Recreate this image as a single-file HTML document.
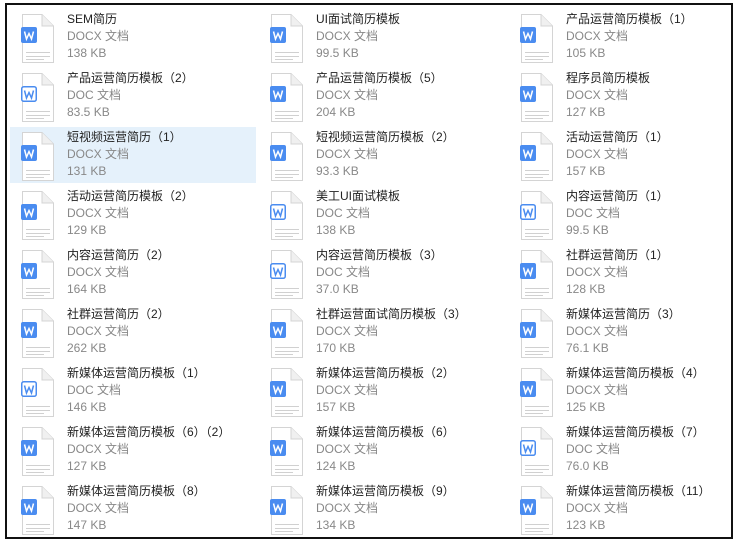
<!DOCTYPE html>
<html><head><meta charset="utf-8"><style>
body{margin:0;width:740px;height:544px;background:#fff;position:relative;overflow:hidden;font-family:"Liberation Sans","Noto Sans CJK SC",sans-serif;}
.frame{position:absolute;left:5px;top:3px;width:724px;height:532px;border:2.5px solid #111;}
.it{position:absolute;width:246px;height:56px;}
.it.sel{background:#e5f1fb;}
.it svg{position:absolute;left:0px;top:3px;}
.t{position:absolute;left:57px;font-size:12px;line-height:14px;white-space:nowrap;}
.t1{top:2px;color:#222;}
.t2{top:19px;color:#888;}
.t3{top:36px;color:#888;}
.c0{left:10px}.c1{left:259px}.c2{left:509px}
</style></head><body>
<div class="frame"></div>
<svg width="0" height="0" style="position:absolute"><defs>
<g id="pg"><path d="M12.5 1.5 H32 L43.5 13 V49.5 H12.5 Z" fill="#fff" stroke="#d4d4d4"/><path d="M32 1.5 V13 H43.5" fill="#f0f0f0" stroke="#d4d4d4"/><path d="M16 39.5H40M16 43.5H40M16 46.5H34" stroke="#d0d0d0"/></g>
<g id="x"><use href="#pg"/><rect x="11" y="14" width="16" height="16" rx="2" fill="#4a8cf0"/><path d="M14.5 18.5 L16.5 26 L19 20.5 L21.5 26 L23.5 18.5" fill="none" stroke="#fff" stroke-width="1.5"/></g>
<g id="d"><use href="#pg"/><rect x="11.75" y="14.75" width="14.5" height="14.5" rx="2" fill="#fff" stroke="#4a8cf0" stroke-width="1.5"/><path d="M14.5 18.5 L16.5 26 L19 20.5 L21.5 26 L23.5 18.5" fill="none" stroke="#4a8cf0" stroke-width="1.5"/></g>
</defs></svg>

<div class="it c0" style="top:10px"><svg width="46" height="52"><use href="#x"/></svg><div class="t t1">SEM简历</div><div class="t t2">DOCX 文档</div><div class="t t3">138 KB</div></div>
<div class="it c1" style="top:10px"><svg width="46" height="52"><use href="#x"/></svg><div class="t t1">UI面试简历模板</div><div class="t t2">DOCX 文档</div><div class="t t3">99.5 KB</div></div>
<div class="it c2" style="top:10px"><svg width="46" height="52"><use href="#x"/></svg><div class="t t1">产品运营简历模板（1）</div><div class="t t2">DOCX 文档</div><div class="t t3">105 KB</div></div>

<div class="it c0" style="top:69px"><svg width="46" height="52"><use href="#d"/></svg><div class="t t1">产品运营简历模板（2）</div><div class="t t2">DOC 文档</div><div class="t t3">83.5 KB</div></div>
<div class="it c1" style="top:69px"><svg width="46" height="52"><use href="#x"/></svg><div class="t t1">产品运营简历模板（5）</div><div class="t t2">DOCX 文档</div><div class="t t3">204 KB</div></div>
<div class="it c2" style="top:69px"><svg width="46" height="52"><use href="#x"/></svg><div class="t t1">程序员简历模板</div><div class="t t2">DOCX 文档</div><div class="t t3">127 KB</div></div>

<div class="it c0 sel" style="top:127px"><svg width="46" height="52" style="top:4px"><use href="#x"/></svg><div class="t t1" style="top:3px">短视频运营简历（1）</div><div class="t t2" style="top:20px">DOCX 文档</div><div class="t t3" style="top:37px">131 KB</div></div>
<div class="it c1" style="top:128px"><svg width="46" height="52"><use href="#x"/></svg><div class="t t1">短视频运营简历模板（2）</div><div class="t t2">DOCX 文档</div><div class="t t3">93.3 KB</div></div>
<div class="it c2" style="top:128px"><svg width="46" height="52"><use href="#x"/></svg><div class="t t1">活动运营简历（1）</div><div class="t t2">DOCX 文档</div><div class="t t3">157 KB</div></div>

<div class="it c0" style="top:187px"><svg width="46" height="52"><use href="#x"/></svg><div class="t t1">活动运营简历模板（2）</div><div class="t t2">DOCX 文档</div><div class="t t3">129 KB</div></div>
<div class="it c1" style="top:187px"><svg width="46" height="52"><use href="#d"/></svg><div class="t t1">美工UI面试模板</div><div class="t t2">DOC 文档</div><div class="t t3">138 KB</div></div>
<div class="it c2" style="top:187px"><svg width="46" height="52"><use href="#d"/></svg><div class="t t1">内容运营简历（1）</div><div class="t t2">DOC 文档</div><div class="t t3">99.5 KB</div></div>

<div class="it c0" style="top:246px"><svg width="46" height="52"><use href="#x"/></svg><div class="t t1">内容运营简历（2）</div><div class="t t2">DOCX 文档</div><div class="t t3">164 KB</div></div>
<div class="it c1" style="top:246px"><svg width="46" height="52"><use href="#d"/></svg><div class="t t1">内容运营简历模板（3）</div><div class="t t2">DOC 文档</div><div class="t t3">37.0 KB</div></div>
<div class="it c2" style="top:246px"><svg width="46" height="52"><use href="#x"/></svg><div class="t t1">社群运营简历（1）</div><div class="t t2">DOCX 文档</div><div class="t t3">128 KB</div></div>

<div class="it c0" style="top:305px"><svg width="46" height="52"><use href="#x"/></svg><div class="t t1">社群运营简历（2）</div><div class="t t2">DOCX 文档</div><div class="t t3">262 KB</div></div>
<div class="it c1" style="top:305px"><svg width="46" height="52"><use href="#x"/></svg><div class="t t1">社群运营面试简历模板（3）</div><div class="t t2">DOCX 文档</div><div class="t t3">170 KB</div></div>
<div class="it c2" style="top:305px"><svg width="46" height="52"><use href="#x"/></svg><div class="t t1">新媒体运营简历（3）</div><div class="t t2">DOCX 文档</div><div class="t t3">76.1 KB</div></div>

<div class="it c0" style="top:364px"><svg width="46" height="52"><use href="#d"/></svg><div class="t t1">新媒体运营简历模板（1）</div><div class="t t2">DOC 文档</div><div class="t t3">146 KB</div></div>
<div class="it c1" style="top:364px"><svg width="46" height="52"><use href="#x"/></svg><div class="t t1">新媒体运营简历模板（2）</div><div class="t t2">DOCX 文档</div><div class="t t3">157 KB</div></div>
<div class="it c2" style="top:364px"><svg width="46" height="52"><use href="#x"/></svg><div class="t t1">新媒体运营简历模板（4）</div><div class="t t2">DOCX 文档</div><div class="t t3">125 KB</div></div>

<div class="it c0" style="top:423px"><svg width="46" height="52"><use href="#x"/></svg><div class="t t1">新媒体运营简历模板（6）（2）</div><div class="t t2">DOCX 文档</div><div class="t t3">127 KB</div></div>
<div class="it c1" style="top:423px"><svg width="46" height="52"><use href="#x"/></svg><div class="t t1">新媒体运营简历模板（6）</div><div class="t t2">DOCX 文档</div><div class="t t3">124 KB</div></div>
<div class="it c2" style="top:423px"><svg width="46" height="52"><use href="#d"/></svg><div class="t t1">新媒体运营简历模板（7）</div><div class="t t2">DOC 文档</div><div class="t t3">76.0 KB</div></div>

<div class="it c0" style="top:482px"><svg width="46" height="52"><use href="#x"/></svg><div class="t t1">新媒体运营简历模板（8）</div><div class="t t2">DOCX 文档</div><div class="t t3">147 KB</div></div>
<div class="it c1" style="top:482px"><svg width="46" height="52"><use href="#x"/></svg><div class="t t1">新媒体运营简历模板（9）</div><div class="t t2">DOCX 文档</div><div class="t t3">134 KB</div></div>
<div class="it c2" style="top:482px"><svg width="46" height="52"><use href="#x"/></svg><div class="t t1">新媒体运营简历模板（11）</div><div class="t t2">DOCX 文档</div><div class="t t3">123 KB</div></div>
</body></html>
